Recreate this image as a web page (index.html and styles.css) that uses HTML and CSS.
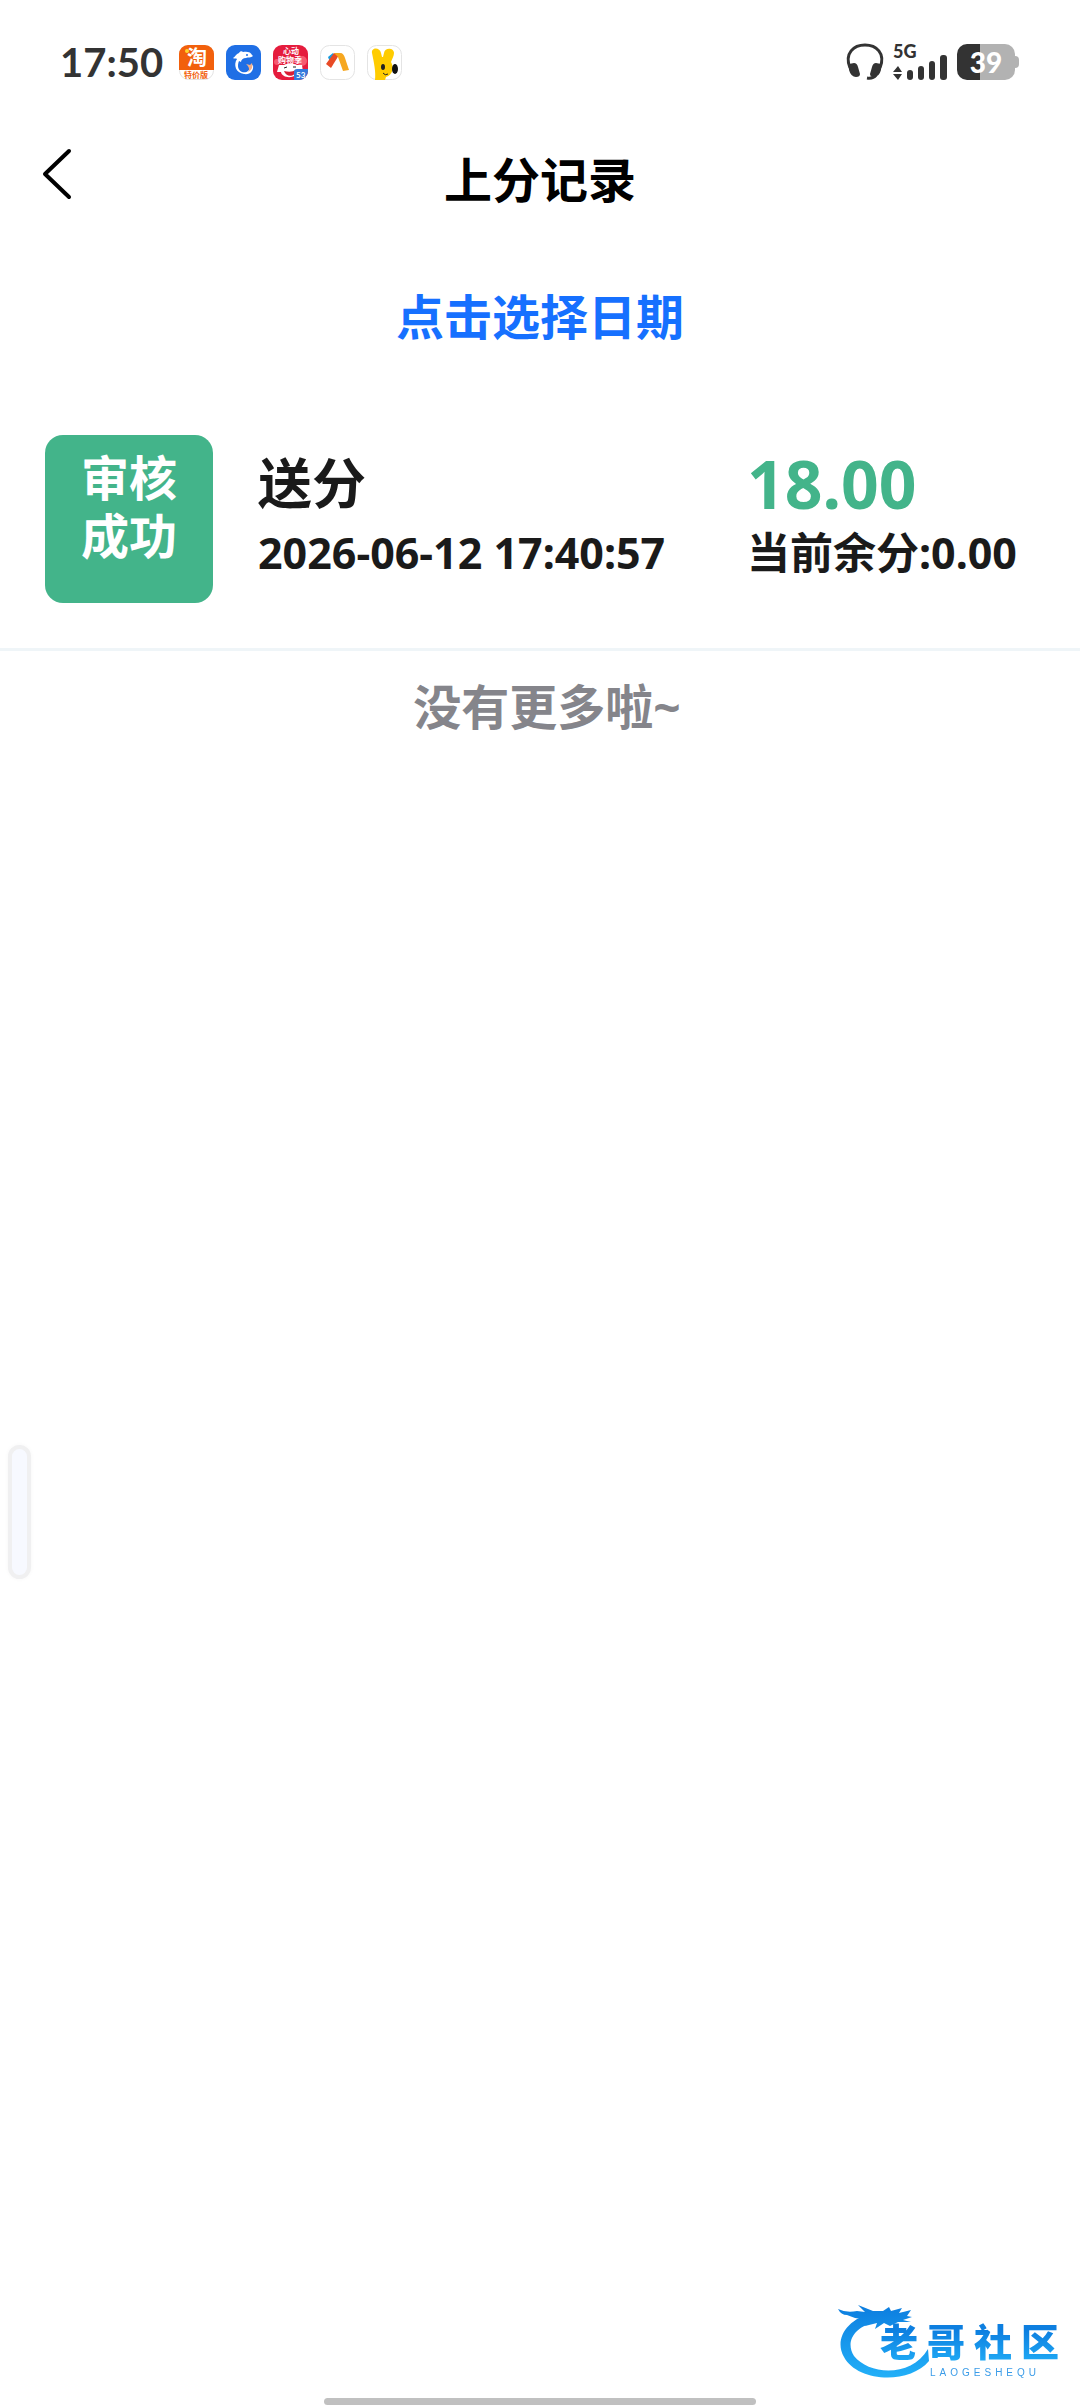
FILE: index.html
```html
<!DOCTYPE html>
<html lang="zh-CN">
<head>
    <meta charset="UTF-8">
    <title>上分记录</title>
    <meta name="viewport" content="width=device-width, initial-scale=1.0">
    <link rel="stylesheet" href="styles.css">
</head>
<body>
    <div class="status-bar">
        <span class="clock">17:50</span>
        <div class="app-icons">
            <svg viewBox="0 0 35 35">
                <rect x="0.5" y="0.5" width="34" height="34" rx="9" fill="#fff" stroke="#e4e4e4"/>
                <path d="M0 25V9a9 9 0 0 1 9-9h17a9 9 0 0 1 9 9v16z" fill="#f2600c"/>
                <text x="8" y="20" font-size="20" fill="#fff">淘</text>
                <circle cx="8" cy="6" r="2" fill="#ffd62a"/>
                <text x="5" y="33" font-size="8" fill="#f2600c">特价版</text>
            </svg>
            <svg viewBox="0 0 35 35">
                <rect width="35" height="35" rx="9" fill="#1f6fe5"/>
                <path d="M7 13c2-1 3-4 6-5 1-2 3-2 4-1 4-1 8 0 9 3l1 1c-2 2-5 1-7 2-3 0-5 2-5 4l-2-1c-2 5-1 9 3 11 4 1 8-1 8-5l3-2c1 6-3 10-9 9-8-1-11-9-7-15-1-1-3 0-4-1z" fill="#fff"/>
                <path d="M20 19l4 1 2-2c1 4 0 7-4 9 2-3 1-5-2-8z" fill="#f2b08a"/>
                <circle cx="21" cy="10" r="1" fill="#1f6fe5"/>
            </svg>
            <svg viewBox="0 0 35 35">
                <rect width="35" height="35" rx="9" fill="#e51c3d"/>
                <circle cx="29" cy="16" r="5" fill="#f65a70"/>
                <circle cx="4" cy="17" r="3" fill="#f65a70"/>
                <text x="10" y="9" font-size="8" fill="#fff">心动</text>
                <text x="5" y="18" font-size="8" fill="#fff">购物季</text>
                <path d="M4 27l2-7 5 0c4-2 9-2 13 0l5 0 1 7-5-1c-1 8-16 8-17 1z" fill="#fff"/>
                <path d="M11 26q7 2 12-1c0 7-10 8-12 1z" fill="#d91f35"/>
                <path d="M11 23l3-1M20 22l3 0" stroke="#222" stroke-width="1"/>
                <path d="M21 27q0-3 3-3h11v2a9 9 0 0 1-9 9h-5z" fill="#3479dc"/>
                <text x="23" y="33" font-size="8" fill="#fff">53</text>
            </svg>
            <svg viewBox="0 0 35 35">
                <rect x="0.5" y="0.5" width="34" height="34" rx="9" fill="#fff" stroke="#e4e4e4"/>
                <path d="M8 12l5-4 2 3-5 6z" fill="#159ce0"/>
                <path d="M6 19l8-11 5 2-8 13z" fill="#e84a25"/>
                <path d="M14 8h6c3 0 4 2 5 5l4 12-6 1-5-14z" fill="#f6a720"/>
            </svg>
            <svg viewBox="0 0 35 35">
                <rect x="0.5" y="0.5" width="34" height="34" rx="9" fill="#fff" stroke="#e4e4e4"/>
                <path d="M5 8c-1-6 8-6 9 0l1 4h1l1-4c1-6 10-5 10 0 0 3-2 6-3 9 3 5 2 13-5 15l-1 3H8c1-8-1-17-3-27z" fill="#fc0"/>
                <ellipse cx="16" cy="22" rx="2" ry="3" fill="#222"/>
                <ellipse cx="28" cy="24" rx="3" ry="5" fill="#111"/>
                <path d="M16 28q2 3 5 1" fill="none" stroke="#222"/>
            </svg>
        </div>
        <div class="status-right">
            <svg class="headset" viewBox="0 0 36 36">
                <path d="M3 24C-3 9 7 1 18 1s21 8 15 23" fill="none" stroke="#333" stroke-width="3"/>
                <path d="M2 20l5-1q3 0 4 4l2 7q0 3-4 3-5 0-7-7zM34 20l-5-1q-3 0-4 4l-2 7q0 3 4 3 5 0 7-7z" fill="#333"/>
                <path d="M29 31q-3 4-9 3" fill="none" stroke="#333" stroke-width="3"/>
            </svg>
            <div class="network">
                <span>5G</span>
                <svg viewBox="0 0 54 25">
                    <path d="M0 17l5-6 4 6zM0 19h9l-4 6z" fill="#333"/>
                    <rect x="14" y="15" width="6" height="10" rx="3" fill="#333"/>
                    <rect x="25" y="11" width="6" height="14" rx="3" fill="#333"/>
                    <rect x="36" y="6" width="6" height="19" rx="3" fill="#333"/>
                    <rect x="47" y="0" width="7" height="25" rx="3" fill="#333"/>
                </svg>
            </div>
            <div class="battery">39</div>
        </div>
    </div>

    <header class="nav-bar">
        <button class="back-btn" aria-label="返回">
            <svg viewBox="0 0 30 52">
                <path d="M27 3L3 26l24 23" fill="none" stroke="#000" stroke-width="4" stroke-linecap="round" stroke-linejoin="round"/>
            </svg>
        </button>
        <h1>上分记录</h1>
    </header>

    <main>
        <div class="date-picker">
            <button class="date-btn">点击选择日期</button>
        </div>
        <div class="record">
            <div class="badge">审核<br>成功</div>
            <div class="info">
                <div class="name">送分</div>
                <div class="sub">2026-06-12 17:40:57</div>
            </div>
            <div class="info">
                <div class="amount">18.00</div>
                <div class="sub">当前余分:0.00</div>
            </div>
        </div>
        <p class="no-more">没有更多啦~</p>
    </main>

    <div class="side-handle"></div>

    <!-- site watermark -->
    <svg class="watermark" viewBox="0 0 226 82">
        <defs>
            <linearGradient id="blue" gradientUnits="userSpaceOnUse" x1="0" y1="6" x2="0" y2="76">
                <stop offset="0" stop-color="#0d7fe0"/>
                <stop offset="1" stop-color="#22b0f8"/>
            </linearGradient>
            <linearGradient id="blueText" x1="0" y1="0" x2="0" y2="1">
                <stop offset="0.3" stop-color="#0d7fe0"/>
                <stop offset="1" stop-color="#22b0f8"/>
            </linearGradient>
        </defs>
        <path d="M35 11C8 17-4 38 6 55c13 25 65 28 85 4l-1-12C73 76 31 73 16 54 7 40 16 24 39 20z" fill="url(#blue)"/>
        <path d="M0 7q8 4 19 2l8 1-7-7 15 6 10 0 6-4 2 4 11-3-3 5 12-3-4 6 5 1-9 3 8 2-13 0-8 4-6-3-9 6 2-6-12 3 3-6-13-2-8-3q-6 0-9-6z" fill="url(#blue)"/>
        <text class="mark-cn" x="42 89 136 183" y="54" fill="url(#blueText)">老哥社区</text>
        <text class="mark-en" x="92" y="74">LAOGESHEQU</text>
    </svg>
    <div class="home-bar"></div>
</body>
</html>
```
FILE: styles.css
```css
* {
    box-sizing: border-box;
}
body {
    margin: 0;
    min-height: 100vh;
    position: relative;
    background: #fff;
    color: #1a1a1a;
    font-family: "Noto Sans", "Noto Sans CJK SC", sans-serif;
    font-weight: bold;
}
button {
    border: none;
    padding: 0;
    background: none;
    font: inherit;
    cursor: pointer;
}
svg {
    display: block;
    overflow: visible;
}

/* status bar */
.status-bar {
    display: flex;
    align-items: center;
    height: 120px;
    padding: 4px 60px 0;
    color: #333;
    font-family: Lato, "Noto Sans CJK SC", sans-serif;
}
.clock {
    font-size: 40px;
    line-height: 48px;
}
.app-icons {
    display: flex;
    gap: 12px;
    margin-left: 16px;
}
.app-icons svg {
    width: 35px;
    height: 35px;
}
.status-right {
    display: flex;
    align-items: center;
    gap: 10px;
    margin-left: auto;
}
.headset {
    width: 36px;
    height: 36px;
}
.network {
    height: 36px;
    position: relative;
    padding-top: 11px;
}
.network span {
    position: absolute;
    top: -3px;
    left: 0;
    font-size: 18px;
    font-weight: 900;
    line-height: 20px;
}
.network svg {
    width: 54px;
    height: 25px;
}
.battery {
    position: relative;
    width: 58px;
    height: 36px;
    margin-right: 5px;
    border-radius: 10px;
    background: linear-gradient(to right, #333 40%, #b2b2b2 40%);
    color: #fff;
    font-size: 28px;
    font-weight: 900;
    line-height: 36px;
    text-align: center;
}
.battery::after {
    content: "";
    position: absolute;
    top: 12px;
    right: -4px;
    width: 4px;
    height: 12px;
    border-radius: 0 4px 4px 0;
    background: #b2b2b2;
}

/* title */
.nav-bar {
    display: grid;
    grid-template-columns: 72px 1fr 72px;
    align-items: center;
    height: 120px;
    color: #000;
}
.back-btn {
    padding: 0 0 12px 42px;
}
.back-btn svg {
    width: 30px;
    height: 52px;
}
.nav-bar h1 {
    margin: 0;
    font-size: 48px;
    line-height: 60px;
    text-align: center;
}
.date-picker {
    display: flex;
    justify-content: center;
    align-items: center;
    height: 150px;
    padding-top: 4px;
}
.date-btn {
    color: #1670ff;
    font-size: 48px;
    line-height: 60px;
}

/* record list */
.record {
    display: grid;
    grid-template-columns: 168px 1fr 288px;
    gap: 45px;
    padding: 45px;
    border-bottom: 3px solid #eff5f8;
}
.badge {
    height: 168px;
    padding-top: 14px;
    border-radius: 18px;
    background: #43b48a;
    color: #fff;
    font-size: 48px;
    line-height: 58px;
    text-align: center;
}
.info {
    padding-top: 8px;
    white-space: nowrap;
}
.name, .amount {
    height: 80px;
    font-size: 54px;
    line-height: 80px;
}
.amount {
    color: #43b48a;
    font-size: 66px;
}
.sub {
    font-size: 43px;
    line-height: 60px;
}
.no-more {
    margin: 26px 0 0;
    padding-left: 14px;
    color: #85858b;
    font-size: 48px;
    line-height: 60px;
    text-align: center;
}

/* floating parts */
.side-handle {
    position: fixed;
    top: 60%;
    left: 8px;
    width: 23px;
    height: 134px;
    border: 4px solid #f0f0f1;
    border-radius: 12px;
    background: #f7f9ff;
    box-shadow: 0 0 4px #f6f6f6;
}
.watermark {
    position: fixed;
    right: 16px;
    bottom: 24px;
    width: 226px;
    height: 82px;
}
.mark-cn {
    font-size: 38px;
    font-weight: 900;
}
.mark-en {
    fill: #3b9ce8;
    font-family: "Liberation Sans", sans-serif;
    font-size: 10px;
    font-weight: normal;
    letter-spacing: 4px;
}
.home-bar {
    position: fixed;
    left: 30%;
    bottom: 3px;
    width: 40%;
    height: 7px;
    border-radius: 4px;
    background: #c0c0c0;
}
```
